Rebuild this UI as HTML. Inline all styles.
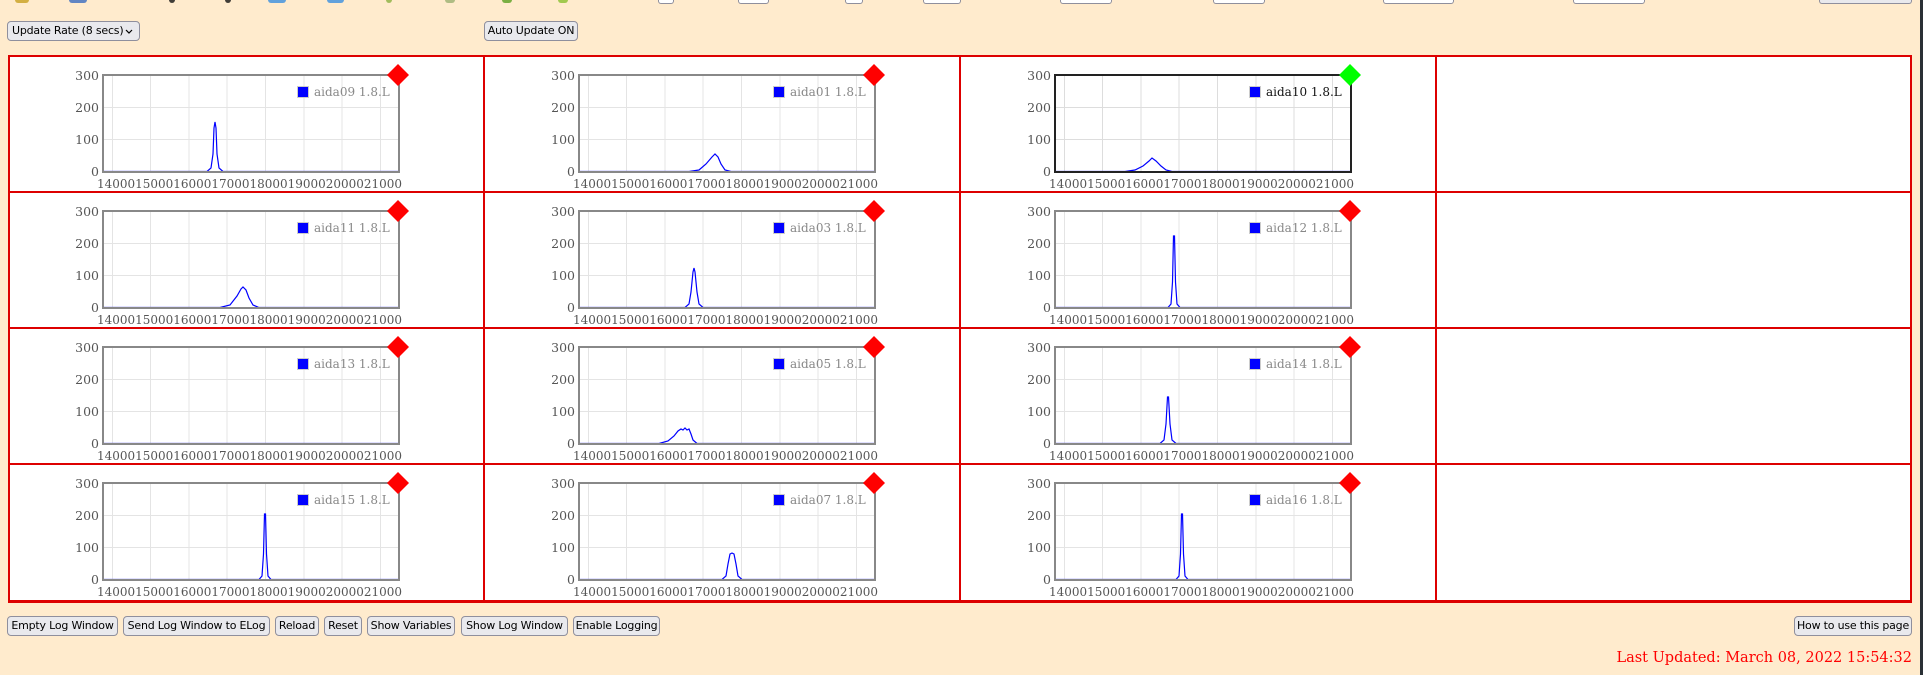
<!DOCTYPE html>
<html><head><meta charset="utf-8"><style>
*{margin:0;padding:0;box-sizing:border-box}
body{width:1923px;height:675px;background:#ffebcd;position:relative;overflow:hidden;font-family:"DejaVu Sans","Liberation Sans",sans-serif}
.b{position:absolute;height:20px;background:#e9e9ed;border:1px solid #8f8f9d;border-radius:4px;font-size:11px;line-height:18px;text-align:center;color:#000;white-space:nowrap;overflow:hidden;letter-spacing:-0.2px}
.tb{position:absolute;top:0;height:4px;background:#fff;border:1px solid #8f8f9d;border-top:none;border-radius:0 0 3px 3px}
.ic{position:absolute;top:0;height:3px;border-radius:0 0 6px 6px;opacity:.8}
.hl{position:absolute;left:8px;width:1904px;height:2px;background:#d00}
.vl{position:absolute;top:55px;width:2px;height:548px;background:#d00}
.cell{position:absolute;background:#fff}
svg{position:absolute;overflow:visible}
svg text{font-family:"DejaVu Serif","Liberation Serif",serif;font-size:12.5px;fill:#555}
svg .lg{fill:#888;font-size:12px}
</style></head><body>
<div class="ic" style="left:15px;width:14px;background:#c8a020"></div>
<div class="ic" style="left:69px;width:18px;background:#3a6cc0"></div>
<div class="ic" style="left:169px;width:6px;background:#111"></div>
<div class="ic" style="left:225px;width:6px;background:#111"></div>
<div class="ic" style="left:268px;width:18px;background:#3a8ee0"></div>
<div class="ic" style="left:327px;width:17px;background:#3a8ee0"></div>
<div class="ic" style="left:386px;width:6px;background:#8ab040"></div>
<div class="ic" style="left:445px;width:10px;background:#9bb070"></div>
<div class="ic" style="left:502px;width:10px;background:#5aa020"></div>
<div class="ic" style="left:558px;width:10px;background:#8ac030"></div>
<div class="tb" style="left:658px;width:16px"></div>
<div class="tb" style="left:738px;width:31px"></div>
<div class="tb" style="left:845px;width:18px"></div>
<div class="tb" style="left:923px;width:38px"></div>
<div class="tb" style="left:1060px;width:52px"></div>
<div class="tb" style="left:1213px;width:52px"></div>
<div class="tb" style="left:1383px;width:71px"></div>
<div class="tb" style="left:1573px;width:72px"></div>
<div class="tb" style="left:1819px;width:93px;background:#e9e9ed"></div>
<div style="position:absolute;left:1920px;top:0;width:3px;height:675px;background:#2a3035"></div>

<div class="b" style="left:7px;top:21px;width:133px;text-align:left;padding-left:4px">Update Rate (8 secs) <svg style="position:absolute;left:117px;top:7px" width="8" height="5"><path d="M1 1L4 4L7 1" fill="none" stroke="#000" stroke-width="1.2"/></svg></div>
<div class="b" style="left:484px;top:21px;width:94px">Auto Update ON</div>

<div class="cell" style="left:8px;top:55px;width:1904px;height:548px"></div>
<div class="hl" style="top:55px"></div><div class="hl" style="top:191px"></div><div class="hl" style="top:327px"></div><div class="hl" style="top:463px"></div><div class="hl" style="top:600px;height:3px"></div>
<div class="vl" style="left:8px"></div><div class="vl" style="left:483px"></div><div class="vl" style="left:959px"></div><div class="vl" style="left:1435px"></div><div class="vl" style="left:1910px"></div>

<svg style="left:8px;top:56px" width="476" height="136"><g stroke="#e4e4e4" stroke-width="1"><path d="M96 51.5H390M96 83.5H390M104.5 20V115M142.5 20V115M181 20V115M219 20V115M257.5 20V115M296 20V115M334 20V115M372.5 20V115"/></g><path d="M96 115.5H199L203 112L205 98L206 72L207 66L208 72L209 98L211 112L215 115.5H390" fill="none" stroke="#00f" stroke-width="1.2"/><rect x="95" y="19" width="296" height="97" fill="none" stroke="#888" stroke-width="2"/><rect x="289.5" y="30.5" width="11" height="11" fill="#00f" stroke="#ccc"/><text class="lg" x="306" y="40">aida09 1.8.L</text><text x="91" y="24" text-anchor="end">300</text><text x="91" y="56" text-anchor="end">200</text><text x="91" y="88" text-anchor="end">100</text><text x="91" y="120" text-anchor="end">0</text><text x="89" y="132" textLength="305" lengthAdjust="spacingAndGlyphs">1400015000160001700018000190002000021000</text><path d="M390 8L401 19L390 30L379 19Z" fill="#f00"/></svg>

<svg style="left:484px;top:56px" width="476" height="136"><g stroke="#e4e4e4"><path d="M96 51.5H390M96 83.5H390M104.5 20V115M142.5 20V115M181 20V115M219 20V115M257.5 20V115M296 20V115M334 20V115M372.5 20V115"/></g><path d="M96 115.5H205L215 114L222 108L228 101L231 98L234 101L237 108L241 114L247 115.5H390" fill="none" stroke="#00f" stroke-width="1.2"/><rect x="95" y="19" width="296" height="97" fill="none" stroke="#888" stroke-width="2"/><rect x="289.5" y="30.5" width="11" height="11" fill="#00f" stroke="#ccc"/><text class="lg" x="306" y="40">aida01 1.8.L</text><text x="91" y="24" text-anchor="end">300</text><text x="91" y="56" text-anchor="end">200</text><text x="91" y="88" text-anchor="end">100</text><text x="91" y="120" text-anchor="end">0</text><text x="89" y="132" textLength="305" lengthAdjust="spacingAndGlyphs">1400015000160001700018000190002000021000</text><path d="M390 8L401 19L390 30L379 19Z" fill="#f00"/></svg>

<svg style="left:960px;top:56px" width="476" height="136"><g stroke="#ddd"><path d="M96 51.5H390M96 83.5H390M104.5 20V115M142.5 20V115M181 20V115M219 20V115M257.5 20V115M296 20V115M334 20V115M372.5 20V115"/></g><path d="M96 115.5H165L175 114L183 110L189 105L192 102L196 105L201 110L206 114L212 115.5H390" fill="none" stroke="#00f" stroke-width="1.2"/><rect x="95" y="19" width="296" height="97" fill="none" stroke="#222" stroke-width="2"/><rect x="289.5" y="30.5" width="11" height="11" fill="#00f" stroke="#ccc"/><text class="lg" x="306" y="40" style="fill:#111">aida10 1.8.L</text><text x="91" y="24" text-anchor="end">300</text><text x="91" y="56" text-anchor="end">200</text><text x="91" y="88" text-anchor="end">100</text><text x="91" y="120" text-anchor="end">0</text><text x="89" y="132" textLength="305" lengthAdjust="spacingAndGlyphs">1400015000160001700018000190002000021000</text><path d="M390 8L401 19L390 30L379 19Z" fill="#0f0"/></svg>

<svg style="left:8px;top:192px" width="476" height="136"><g stroke="#e4e4e4"><path d="M96 51.5H390M96 83.5H390M104.5 20V115M142.5 20V115M181 20V115M219 20V115M257.5 20V115M296 20V115M334 20V115M372.5 20V115"/></g><path d="M96 115.5H212L222 113L229 104L233 97L235 95L238 98L241 106L245 113L251 115.5H390" fill="none" stroke="#00f" stroke-width="1.2"/><rect x="95" y="19" width="296" height="97" fill="none" stroke="#888" stroke-width="2"/><rect x="289.5" y="30.5" width="11" height="11" fill="#00f" stroke="#ccc"/><text class="lg" x="306" y="40">aida11 1.8.L</text><text x="91" y="24" text-anchor="end">300</text><text x="91" y="56" text-anchor="end">200</text><text x="91" y="88" text-anchor="end">100</text><text x="91" y="120" text-anchor="end">0</text><text x="89" y="132" textLength="305" lengthAdjust="spacingAndGlyphs">1400015000160001700018000190002000021000</text><path d="M390 8L401 19L390 30L379 19Z" fill="#f00"/></svg>

<svg style="left:484px;top:192px" width="476" height="136"><g stroke="#e4e4e4"><path d="M96 51.5H390M96 83.5H390M104.5 20V115M142.5 20V115M181 20V115M219 20V115M257.5 20V115M296 20V115M334 20V115M372.5 20V115"/></g><path d="M96 115.5H201L205 112L207 100L209 80L210 76L211 80L213 100L215 112L219 115.5H390" fill="none" stroke="#00f" stroke-width="1.2"/><rect x="95" y="19" width="296" height="97" fill="none" stroke="#888" stroke-width="2"/><rect x="289.5" y="30.5" width="11" height="11" fill="#00f" stroke="#ccc"/><text class="lg" x="306" y="40">aida03 1.8.L</text><text x="91" y="24" text-anchor="end">300</text><text x="91" y="56" text-anchor="end">200</text><text x="91" y="88" text-anchor="end">100</text><text x="91" y="120" text-anchor="end">0</text><text x="89" y="132" textLength="305" lengthAdjust="spacingAndGlyphs">1400015000160001700018000190002000021000</text><path d="M390 8L401 19L390 30L379 19Z" fill="#f00"/></svg>

<svg style="left:960px;top:192px" width="476" height="136"><g stroke="#e4e4e4"><path d="M96 51.5H390M96 83.5H390M104.5 20V115M142.5 20V115M181 20V115M219 20V115M257.5 20V115M296 20V115M334 20V115M372.5 20V115"/></g><path d="M96 115.5H208L211 112L212.5 90L213.5 44L214.5 44L215.5 90L217 112L220 115.5H390" fill="none" stroke="#00f" stroke-width="1.2"/><rect x="95" y="19" width="296" height="97" fill="none" stroke="#888" stroke-width="2"/><rect x="289.5" y="30.5" width="11" height="11" fill="#00f" stroke="#ccc"/><text class="lg" x="306" y="40">aida12 1.8.L</text><text x="91" y="24" text-anchor="end">300</text><text x="91" y="56" text-anchor="end">200</text><text x="91" y="88" text-anchor="end">100</text><text x="91" y="120" text-anchor="end">0</text><text x="89" y="132" textLength="305" lengthAdjust="spacingAndGlyphs">1400015000160001700018000190002000021000</text><path d="M390 8L401 19L390 30L379 19Z" fill="#f00"/></svg>

<svg style="left:8px;top:328px" width="476" height="136"><g stroke="#e4e4e4"><path d="M96 51.5H390M96 83.5H390M104.5 20V115M142.5 20V115M181 20V115M219 20V115M257.5 20V115M296 20V115M334 20V115M372.5 20V115"/></g><path d="M96 115.5H390" fill="none" stroke="#00f" stroke-width="1.2"/><rect x="95" y="19" width="296" height="97" fill="none" stroke="#888" stroke-width="2"/><rect x="289.5" y="30.5" width="11" height="11" fill="#00f" stroke="#ccc"/><text class="lg" x="306" y="40">aida13 1.8.L</text><text x="91" y="24" text-anchor="end">300</text><text x="91" y="56" text-anchor="end">200</text><text x="91" y="88" text-anchor="end">100</text><text x="91" y="120" text-anchor="end">0</text><text x="89" y="132" textLength="305" lengthAdjust="spacingAndGlyphs">1400015000160001700018000190002000021000</text><path d="M390 8L401 19L390 30L379 19Z" fill="#f00"/></svg>

<svg style="left:484px;top:328px" width="476" height="136"><g stroke="#e4e4e4"><path d="M96 51.5H390M96 83.5H390M104.5 20V115M142.5 20V115M181 20V115M219 20V115M257.5 20V115M296 20V115M334 20V115M372.5 20V115"/></g><path d="M96 115.5H175L184 113L190 108L194 103L197 101L199 102L201 100L203 102L205 101L207 106L209 112L213 115.5H390" fill="none" stroke="#00f" stroke-width="1.2"/><rect x="95" y="19" width="296" height="97" fill="none" stroke="#888" stroke-width="2"/><rect x="289.5" y="30.5" width="11" height="11" fill="#00f" stroke="#ccc"/><text class="lg" x="306" y="40">aida05 1.8.L</text><text x="91" y="24" text-anchor="end">300</text><text x="91" y="56" text-anchor="end">200</text><text x="91" y="88" text-anchor="end">100</text><text x="91" y="120" text-anchor="end">0</text><text x="89" y="132" textLength="305" lengthAdjust="spacingAndGlyphs">1400015000160001700018000190002000021000</text><path d="M390 8L401 19L390 30L379 19Z" fill="#f00"/></svg>

<svg style="left:960px;top:328px" width="476" height="136"><g stroke="#e4e4e4"><path d="M96 51.5H390M96 83.5H390M104.5 20V115M142.5 20V115M181 20V115M219 20V115M257.5 20V115M296 20V115M334 20V115M372.5 20V115"/></g><path d="M96 115.5H200L204 112L206 96L207.5 69L208.5 69L210 96L212 112L216 115.5H390" fill="none" stroke="#00f" stroke-width="1.2"/><rect x="95" y="19" width="296" height="97" fill="none" stroke="#888" stroke-width="2"/><rect x="289.5" y="30.5" width="11" height="11" fill="#00f" stroke="#ccc"/><text class="lg" x="306" y="40">aida14 1.8.L</text><text x="91" y="24" text-anchor="end">300</text><text x="91" y="56" text-anchor="end">200</text><text x="91" y="88" text-anchor="end">100</text><text x="91" y="120" text-anchor="end">0</text><text x="89" y="132" textLength="305" lengthAdjust="spacingAndGlyphs">1400015000160001700018000190002000021000</text><path d="M390 8L401 19L390 30L379 19Z" fill="#f00"/></svg>

<svg style="left:8px;top:464px" width="476" height="136"><g stroke="#e4e4e4"><path d="M96 51.5H390M96 83.5H390M104.5 20V115M142.5 20V115M181 20V115M219 20V115M257.5 20V115M296 20V115M334 20V115M372.5 20V115"/></g><path d="M96 115.5H251L254 112L255.5 90L256.5 50L257.5 50L258.5 90L260 112L263 115.5H390" fill="none" stroke="#00f" stroke-width="1.2"/><rect x="95" y="19" width="296" height="97" fill="none" stroke="#888" stroke-width="2"/><rect x="289.5" y="30.5" width="11" height="11" fill="#00f" stroke="#ccc"/><text class="lg" x="306" y="40">aida15 1.8.L</text><text x="91" y="24" text-anchor="end">300</text><text x="91" y="56" text-anchor="end">200</text><text x="91" y="88" text-anchor="end">100</text><text x="91" y="120" text-anchor="end">0</text><text x="89" y="132" textLength="305" lengthAdjust="spacingAndGlyphs">1400015000160001700018000190002000021000</text><path d="M390 8L401 19L390 30L379 19Z" fill="#f00"/></svg>

<svg style="left:484px;top:464px" width="476" height="136"><g stroke="#e4e4e4"><path d="M96 51.5H390M96 83.5H390M104.5 20V115M142.5 20V115M181 20V115M219 20V115M257.5 20V115M296 20V115M334 20V115M372.5 20V115"/></g><path d="M96 115.5H238L242 112L244 100L246 90L248 89L250 90L252 100L254 112L258 115.5H390" fill="none" stroke="#00f" stroke-width="1.2"/><rect x="95" y="19" width="296" height="97" fill="none" stroke="#888" stroke-width="2"/><rect x="289.5" y="30.5" width="11" height="11" fill="#00f" stroke="#ccc"/><text class="lg" x="306" y="40">aida07 1.8.L</text><text x="91" y="24" text-anchor="end">300</text><text x="91" y="56" text-anchor="end">200</text><text x="91" y="88" text-anchor="end">100</text><text x="91" y="120" text-anchor="end">0</text><text x="89" y="132" textLength="305" lengthAdjust="spacingAndGlyphs">1400015000160001700018000190002000021000</text><path d="M390 8L401 19L390 30L379 19Z" fill="#f00"/></svg>

<svg style="left:960px;top:464px" width="476" height="136"><g stroke="#e4e4e4"><path d="M96 51.5H390M96 83.5H390M104.5 20V115M142.5 20V115M181 20V115M219 20V115M257.5 20V115M296 20V115M334 20V115M372.5 20V115"/></g><path d="M96 115.5H216L219 112L220.5 90L221.5 50L222.5 50L223.5 90L225 112L228 115.5H390" fill="none" stroke="#00f" stroke-width="1.2"/><rect x="95" y="19" width="296" height="97" fill="none" stroke="#888" stroke-width="2"/><rect x="289.5" y="30.5" width="11" height="11" fill="#00f" stroke="#ccc"/><text class="lg" x="306" y="40">aida16 1.8.L</text><text x="91" y="24" text-anchor="end">300</text><text x="91" y="56" text-anchor="end">200</text><text x="91" y="88" text-anchor="end">100</text><text x="91" y="120" text-anchor="end">0</text><text x="89" y="132" textLength="305" lengthAdjust="spacingAndGlyphs">1400015000160001700018000190002000021000</text><path d="M390 8L401 19L390 30L379 19Z" fill="#f00"/></svg>

<div class="b" style="left:7px;top:616px;width:111px">Empty Log Window</div>
<div class="b" style="left:123px;top:616px;width:147px">Send Log Window to ELog</div>
<div class="b" style="left:275px;top:616px;width:44px">Reload</div>
<div class="b" style="left:324px;top:616px;width:38px">Reset</div>
<div class="b" style="left:367px;top:616px;width:88px">Show Variables</div>
<div class="b" style="left:461px;top:616px;width:107px">Show Log Window</div>
<div class="b" style="left:573px;top:616px;width:87px">Enable Logging</div>
<div class="b" style="left:1794px;top:616px;width:118px">How to use this page</div>

<div style="position:absolute;right:11px;top:650px;font-family:'DejaVu Serif','Liberation Serif',serif;font-size:14.5px;color:#f00;white-space:nowrap">Last Updated: March 08, 2022 15:54:32</div>
</body></html>
